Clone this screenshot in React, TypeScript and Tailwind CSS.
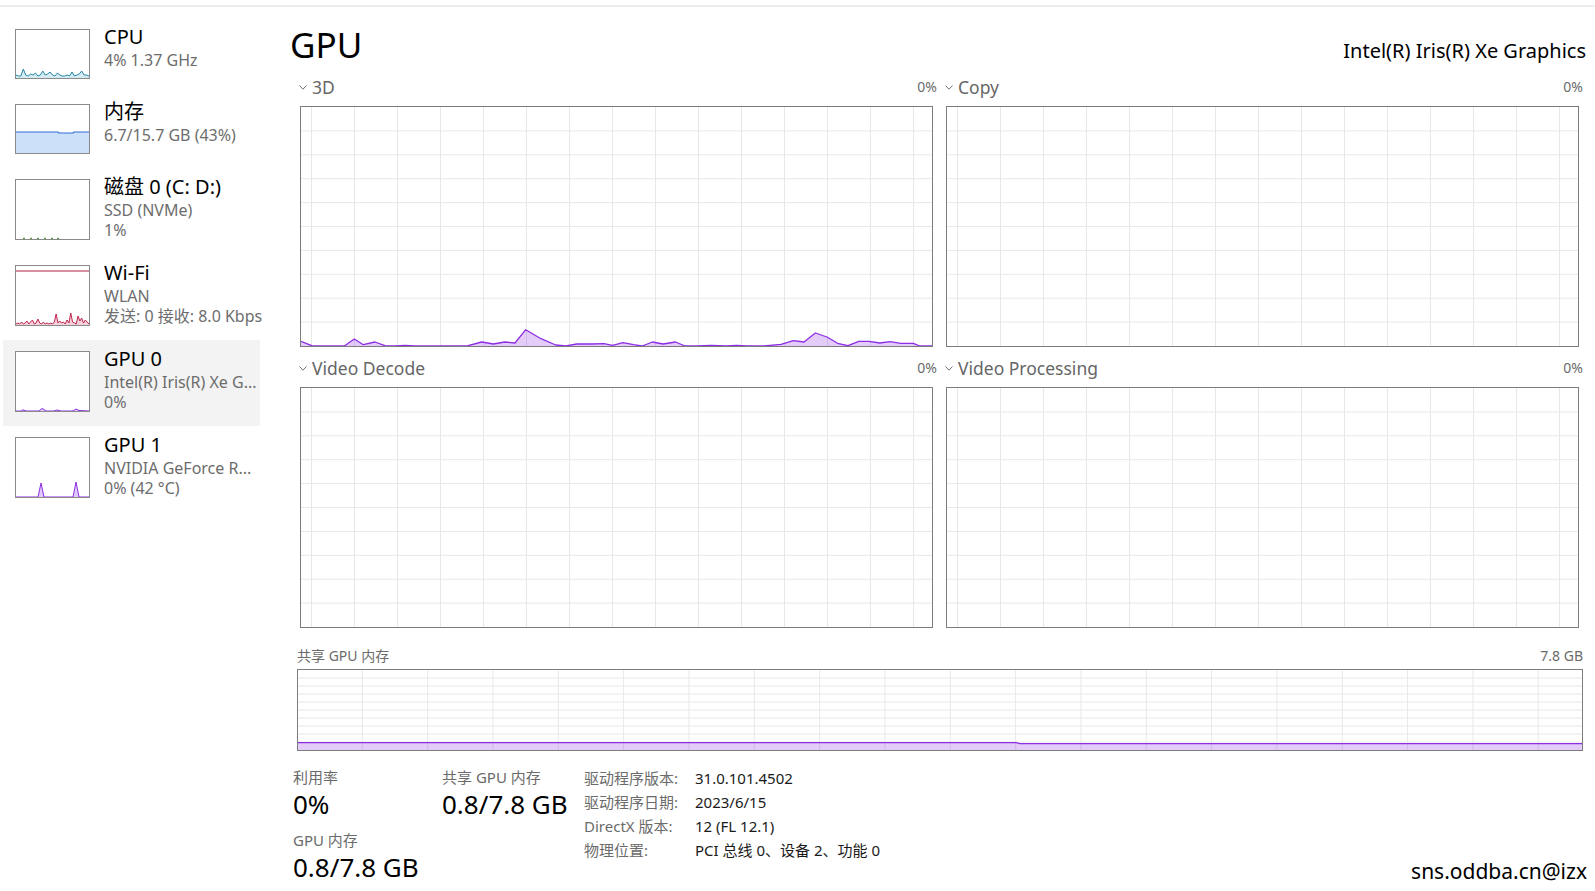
import React from "react";

type Pt = [number, number];

// build an area path from [x, heightAboveBottom] points
function area(pts: Pt[], h: number) {
  const line = pts.map(([x, y], i) => `${i ? "L" : "M"}${x},${h - y}`).join(" ");
  const first = pts[0][0];
  const last = pts[pts.length - 1][0];
  return { line, fill: `${line} L${last},${h} L${first},${h} Z` };
}

function spikes(hs: number[], w: number): Pt[] {
  return hs.map((v, i) => [(i * w) / (hs.length - 1), v] as Pt);
}

function Graph({
  w,
  h,
  vStart,
  vStep,
  rows,
  pts,
}: {
  w: number;
  h: number;
  vStart: number;
  vStep: number;
  rows: number;
  pts?: Pt[];
}) {
  const vs: number[] = [];
  for (let x = vStart; x < w; x += vStep) vs.push(x);
  const hs: number[] = [];
  for (let i = 1; i < rows; i++) hs.push((h * i) / rows);
  const p = pts ? area(pts, h) : null;
  return (
    <svg width={w} height={h} className="block">
      {vs.map((x) => (
        <line key={"v" + x} x1={x} y1={0} x2={x} y2={h} stroke="#e8e8e8" strokeWidth={1} />
      ))}
      {hs.map((y) => (
        <line key={"h" + y} x1={0} y1={y} x2={w} y2={y} stroke="#e8e8e8" strokeWidth={1} />
      ))}
      {p && (
        <>
          <path d={p.fill} fill="#8b2be2" fillOpacity={0.24} />
          <path d={p.line} fill="none" stroke="#8d2ee4" strokeWidth={1.3} strokeLinejoin="round" />
        </>
      )}
    </svg>
  );
}

const pts3d: Pt[] = [
  [0, 4.6], [10.7, 0.3], [19, 0], [43.3, 0], [53.3, 7], [62.3, 1.3], [74, 4], [84, 0.3],
  [94, 0], [104, 0.6], [114, 0], [140.7, 0], [167, 0.3], [180.7, 4], [192.3, 2], [204, 4],
  [214, 3], [224.7, 16.3], [240, 7.3], [254.7, 1], [265, 0], [275.7, 2], [290.5, 2], [303, 2.3],
  [311.5, 0.7], [322, 3.3], [332.5, 1.3], [341, 0], [351.5, 4], [362, 2], [374.6, 4], [384, 0],
  [395.7, 0], [410.4, 0.7], [425, 0], [435.6, 0.7], [446, 0], [463, 0], [480, 1.7], [492.5, 5.3],
  [503, 4], [514.4, 13], [526, 9], [536.6, 2.7], [547, 0.3], [557.7, 4.7], [568, 4.7], [578.8, 3],
  [589, 4.3], [599.8, 2.7], [612.4, 2.7], [618.7, 0], [631, 0],
];
const ptsShared: Pt[] = [[0, 7.4], [718, 7.4], [722, 6.4], [1284, 6.4]];

function Thumb({ kind, tall }: { kind: string; tall: boolean }) {
  const W = 73;
  const H = tall ? 59 : 48;
  let body: React.ReactNode = null;
  if (kind === "cpu") {
    const p = area(spikes([3, 2, 2, 9, 3, 2, 4, 3, 5, 2, 3, 7, 3, 4, 6, 3, 2, 5, 3, 2, 2, 3, 2, 6, 2, 3, 4, 7, 3, 3, 2], W), H);
    body = (
      <>
        <path d={p.fill} fill="#d6ecf3" />
        <path d={p.line} fill="none" stroke="#2587a6" strokeWidth={1} />
      </>
    );
  } else if (kind === "mem") {
    const p = area([[0, 21], [42, 21], [43, 20], [57, 20], [58, 21], [73, 21]], H);
    body = (
      <>
        <path d={p.fill} fill="#cce0fa" />
        <path d={p.line} fill="none" stroke="#2f6fd6" strokeWidth={1.2} />
      </>
    );
  } else if (kind === "disk") {
    body = (
      <>
        {[7, 14, 21, 28, 35, 41].map((x) => (
          <line key={x} x1={x} y1={H - 0.6} x2={x + 2} y2={H - 0.6} stroke="#5a9a3a" strokeWidth={1.2} />
        ))}
      </>
    );
  } else if (kind === "wifi") {
    const p = area(
      spikes([1, 2, 1, 3, 1, 2, 4, 1, 3, 5, 1, 2, 6, 2, 1, 3, 1, 2, 1, 2, 1, 3, 11, 2, 4, 2, 3, 1, 5, 2, 12, 3, 2, 1, 9, 4, 7, 2, 5, 3, 1], W),
      H
    );
    body = (
      <>
        <line x1={0} y1={5} x2={W} y2={5} stroke="#b81d46" strokeWidth={1.2} />
        <path d={p.fill} fill="#f5d2dc" />
        <path d={p.line} fill="none" stroke="#c0244f" strokeWidth={1} />
      </>
    );
  } else if (kind === "gpu0") {
    const p = area(
      [[0, 0], [5, 0], [7, 1.2], [10, 0], [23, 0], [26, 2.5], [28, 1.5], [30, 0], [38, 0], [41, 1], [45, 0], [57, 0], [60, 2], [63, 0.5], [73, 0]],
      H
    );
    body = (
      <>
        <path d={p.fill} fill="#e0cdf8" />
        <path d={p.line} fill="none" stroke="#8d2ee4" strokeWidth={1} />
      </>
    );
  } else if (kind === "gpu1") {
    const p = area(
      [[0, 0], [22, 0], [25, 14], [28, 0], [57, 0], [60, 15], [63, 0], [73, 0]],
      H
    );
    body = (
      <>
        <path d={p.fill} fill="#dfcbf8" />
        <path d={p.line} fill="none" stroke="#8d2ee4" strokeWidth={1} />
      </>
    );
  }
  return (
    <div className="mt-[8px] border border-[#8a8a8a] bg-white shrink-0">
      <svg width={W} height={H} className="block">
        {body}
      </svg>
    </div>
  );
}

function Chevron() {
  return (
    <svg width="8" height="5" className="block">
      <path d="M0.5 0.5 L4 4.2 L7.5 0.5" fill="none" stroke="#707070" strokeWidth={1} />
    </svg>
  );
}

function SectionLabel({ label, value }: { label: string; value: string }) {
  return (
    <div className="h-[20px] flex items-center justify-between">
      <div className="flex items-center">
        <Chevron />
        <span className="ml-[5px] text-[17.5px] leading-[20px] text-[#666666]">{label}</span>
      </div>
      <span className="text-[14px] leading-[20px] text-[#6b6b6b]">{value}</span>
    </div>
  );
}

function EngineChart({ label, pts }: { label: string; pts?: Pt[] }) {
  return (
    <div className="w-[638px]">
      <SectionLabel label={label} value="0%" />
      <div className="mt-[9px] ml-px w-[633px] border border-[#7c7c7c]">
        <Graph w={631} h={239} vStart={10.5} vStep={43} rows={10} pts={pts} />
      </div>
    </div>
  );
}

export default function App() {
  const items = [
    { title: "CPU", lines: ["4% 1.37 GHz"], kind: "cpu" },
    { title: "内存", lines: ["6.7/15.7 GB (43%)"], kind: "mem" },
    { title: "磁盘 0 (C: D:)", lines: ["SSD (NVMe)", "1%"], kind: "disk" },
    { title: "Wi-Fi", lines: ["WLAN", "发送: 0 接收: 8.0 Kbps"], kind: "wifi" },
    { title: "GPU 0", lines: ["Intel(R) Iris(R) Xe G...", "0%"], kind: "gpu0", selected: true },
    { title: "GPU 1", lines: ["NVIDIA GeForce R...", "0% (42 °C)"], kind: "gpu1" },
  ];

  const driver = [
    ["驱动程序版本:", "31.0.101.4502"],
    ["驱动程序日期:", "2023/6/15"],
    ["DirectX 版本:", "12 (FL 12.1)"],
    ["物理位置:", "PCI 总线 0、设备 2、功能 0"],
  ];

  return (
    <div className="w-[1595px] h-[891px] bg-white relative overflow-hidden font-['Noto_Sans','Noto_Sans_CJK_SC',sans-serif] text-black">
      <div className="mt-[5px] h-[2px] bg-[#ededed]" />

      <div className="flex">
        {/* Sidebar */}
        <div className="w-[290px] pt-[11px] shrink-0">
          {items.map((it) => (
            <div
              key={it.title}
              className={`ml-[3px] w-[257px] pl-[12px] pt-[3px] pb-[14px] flex gap-[14px] ${it.selected ? "bg-[#f3f3f3]" : ""}`}
            >
              <Thumb kind={it.kind} tall={it.lines.length > 1} />
              <div className="whitespace-nowrap">
                <div className="pt-[4px] text-[20px] leading-[24px] text-black">{it.title}</div>
                <div className="mt-[1px]">
                  {it.lines.map((l) => (
                    <div key={l} className="text-[16px] leading-[20px] text-[#6d6d6d]">
                      {l}
                    </div>
                  ))}
                </div>
              </div>
            </div>
          ))}
        </div>

        {/* Main */}
        <div className="flex-1 pt-[16px] pr-[9px]">
          <div className="h-[44px] flex items-baseline justify-between">
            <div className="text-[35px] leading-[44px] text-black">GPU</div>
            <div className="text-[20px] leading-[44px] text-black">Intel(R) Iris(R) Xe Graphics</div>
          </div>

          <div className="pl-[9px] pr-[3px]">
            <div className="mt-[10px] flex justify-between">
              <EngineChart label="3D" pts={pts3d} />
              <EngineChart label="Copy" />
            </div>
            <div className="mt-[11px] flex justify-between">
              <EngineChart label="Video Decode" />
              <EngineChart label="Video Processing" />
            </div>
          </div>

          {/* Shared GPU memory */}
          <div className="pl-[7px] pr-[3px] mt-[17px]">
            <div className="h-[20px] flex items-center justify-between text-[14px] text-[#6b6b6b]">
              <span>共享 GPU 内存</span>
              <span>7.8 GB</span>
            </div>
            <div className="mt-[4px] border border-[#7c7c7c]">
              <Graph w={1284} h={80} vStart={64.3} vStep={65.33} rows={10} pts={ptsShared} />
            </div>
          </div>

          {/* Stats */}
          <div className="mt-[16px] pl-[3px] flex">
            <div className="w-[149px]">
              <div className="text-[15px] leading-[20px] text-[#6b6b6b]">利用率</div>
              <div className="text-[26px] leading-[34px] text-black">0%</div>
              <div className="mt-[9px] text-[15px] leading-[20px] text-[#6b6b6b]">GPU 内存</div>
              <div className="text-[26px] leading-[34px] text-black">0.8/7.8 GB</div>
            </div>
            <div className="w-[142px]">
              <div className="text-[15px] leading-[20px] text-[#6b6b6b]">共享 GPU 内存</div>
              <div className="text-[26px] leading-[34px] text-black">0.8/7.8 GB</div>
            </div>
            <div className="-mt-[1px]">
              {driver.map(([k, v]) => (
                <div key={k} className="flex h-[24px] items-center text-[15px]">
                  <span className="w-[111px] text-[#6b6b6b]">{k}</span>
                  <span className="text-[#1a1a1a]">{v}</span>
                </div>
              ))}
            </div>
          </div>
        </div>
      </div>

      <div className="absolute right-[8px] bottom-[8px] text-[21px] leading-[24px] text-black">sns.oddba.cn@izx</div>
    </div>
  );
}
